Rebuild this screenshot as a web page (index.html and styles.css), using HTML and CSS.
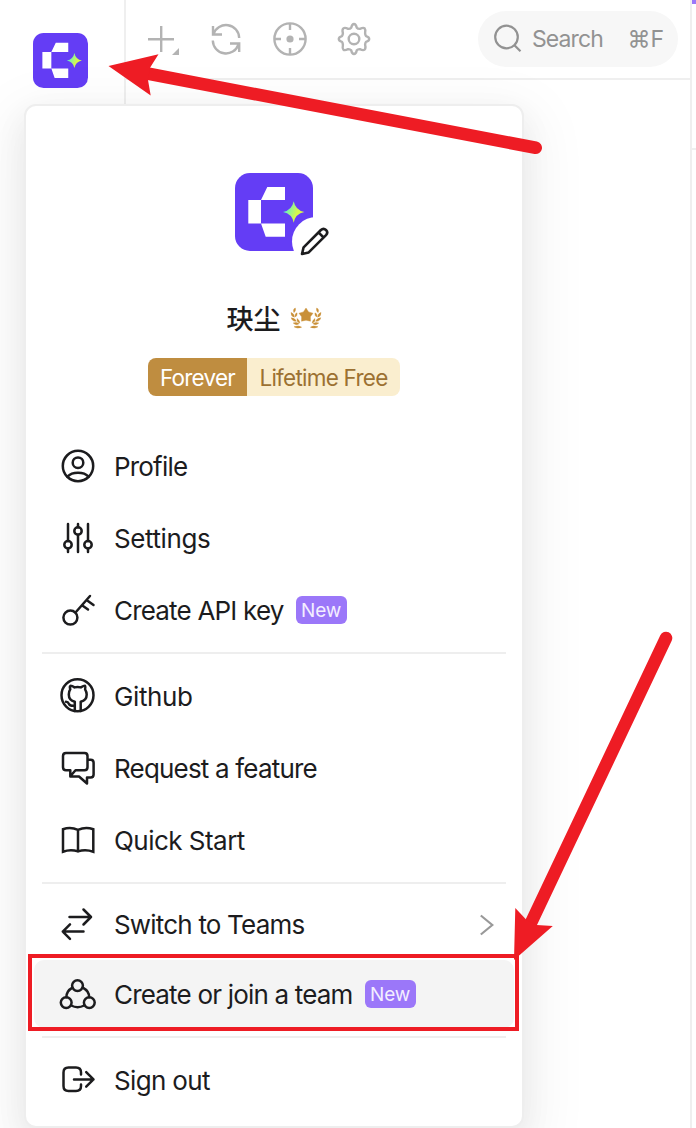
FILE: index.html
```html
<!DOCTYPE html>
<html lang="en">
<head>
<meta charset="utf-8">
<title>Account menu</title>
<link rel="stylesheet" href="styles.css">
</head>
<body>
<svg class="defs" width="0" height="0" aria-hidden="true">
  <defs>
    <linearGradient id="spark" x1="0" y1="0" x2="1" y2="0.4">
      <stop offset="0.2" stop-color="#62f0c8"/>
      <stop offset="0.75" stop-color="#d6f84c"/>
    </linearGradient>
    <symbol id="logo" viewBox="0 0 78 78">
      <rect width="78" height="78" rx="15" fill="#643df5"/>
      <path fill="#fff" d="M13.3 27H26V50.5H13.3zM32.3 14H50V27H26zM26 50.5H50V63.7H30.7z"/>
      <path fill="url(#spark)" d="M58.7 28.3Q60.4 37.3 69.4 39Q60.4 40.7 58.7 49.7Q57 40.7 48 39Q57 37.3 58.7 28.3z"/>
    </symbol>
  </defs>
</svg>
<div class="app">
  <aside class="sidebar"><svg class="logo-small"><use href="#logo"/></svg></aside>
  <main class="main">
    <header class="toolbar">
      <div class="tools">
        <svg class="tool" viewBox="0 0 40 40"><path d="M6 19.2H32M19.2 6V32"/><path class="solid" d="M37 28V35H30z"/></svg>
        <svg class="tool" viewBox="0 0 40 40"><path d="M7 6V14.5H16M7.5 14A13.2 13.2 0 0 1 33.2 18M33.2 32V23.5H24M6.8 20.5A13.2 13.2 0 0 0 32.5 24.5"/></svg>
        <svg class="tool" viewBox="0 0 40 40"><circle cx="20" cy="19" r="15.6"/><path d="M20 3.4V10M20 28V34.6M4.4 19H11M29 19H35.6"/><circle class="solid" cx="20" cy="19" r="3.6"/></svg>
        <svg class="tool" viewBox="0 0 40 40"><path stroke-linejoin="round" d="M17.2 7.8Q18 4 20 4T22.8 7.8Q23.8 9 25.9 8.9Q29.5 7.1 30.6 8.4T31.1 13.1Q31.2 15 32 16.1Q35.2 17 35.2 19T32 21.9Q31.2 23 31.1 24.9Q32.1 28.4 30.6 29.6T25.9 29.1Q23.8 29 22.8 30.2Q22 34 20 34T17.2 30.2Q16.2 29 14.1 29.1Q10.6 30.8 9.4 29.6T8.9 24.9Q8.8 23 8 21.9Q4.8 21 4.8 19T8 16.1Q8.8 15 8.9 13.1Q7.9 9.6 9.4 8.4T14.1 8.9Q16.2 9 17.2 7.8z"/><circle cx="20" cy="19" r="5.3"/></svg>
      </div>
      <div class="search">
        <svg class="search-icon" viewBox="0 0 30 30"><circle cx="13.5" cy="13" r="11.3"/><path d="M21.2 21L27.5 27.3"/></svg>
        <span class="search-label">Search</span><span class="shortcut">⌘F</span>
      </div>
    </header>
  </main>
  <aside class="rail"><div class="rail-accent"></div></aside>
</div>

<section class="menu">
  <div class="account">
    <div class="avatar">
      <svg class="logo-large"><use href="#logo"/></svg>
      <div class="edit"><svg viewBox="0 0 30 30"><path d="M2 28L3.6 21.3L20.9 4Q23.5 1.6 26 4T26 9.1L8.7 26.4zM18.5 6.4L23.6 11.5"/></svg></div>
    </div>
    <div class="name"><span>玦尘</span>
      <svg class="laurel" viewBox="0 0 32 22"><path d="M16 1L18.6 4.9L23 6.2L20.4 9.8L20.5 14.2L16 13.2L11.5 14.2L11.6 9.8L9 6.2L13.4 4.9z"/><g id="branch"><path d="M5.3 1Q2.5 2.2 4 5.6Q6.2 3.5 5.3 1zM1 5.4Q.8 9.6 4.4 10.2Q4.5 6.8 1 5.4zM7 5.8Q4.2 6.8 5.4 10Q7.6 8.6 7 5.8zM1.2 10.8Q2.3 14.8 6.4 14.2Q5 11.2 1.2 10.8zM3.2 16Q6 19 9 16.8Q6.6 14.6 3.2 16zM4 19.8Q8.8 18 11.6 20.2Q7.5 22.2 4 19.8zM7 11.5Q6.6 15.4 9.8 16.2Q10 13.4 7 11.5z"/></g><use href="#branch" transform="matrix(-1 0 0 1 32 0)"/></svg>
    </div>
    <div class="plan"><span class="plan-term">Forever</span><span class="plan-name">Lifetime Free</span></div>
  </div>
  <nav class="group">
    <a class="item"><svg class="icon" viewBox="0 0 40 40"><circle cx="20" cy="20" r="15.2"/><circle cx="20" cy="16.7" r="5.3"/><path d="M9.5 30.7Q13 26.8 20 26.8T30.5 30.7"/></svg><span class="snug">Profile</span></a>
    <a class="item"><svg class="icon" viewBox="0 0 40 40"><path d="M10 6V23M10 30.5V34M20 6V9.2M20 16.8V34M30 6V23M30 30.5V34"/><circle cx="10" cy="26.8" r="3.7"/><circle cx="20" cy="13" r="3.7"/><circle cx="30" cy="26.8" r="3.7"/></svg><span class="loose">Settings</span></a>
    <a class="item"><svg class="icon" viewBox="0 0 40 40"><circle cx="12.4" cy="27.6" r="7"/><path d="M17.5 22.5L32 6M28.5 10L35.5 15M24 15.2L30 19.5"/></svg><span class="snug">Create API key</span><b class="badge">New</b></a>
  </nav>
  <nav class="group">
    <a class="item"><svg class="icon" viewBox="0 0 40 40"><circle cx="19.5" cy="19.2" r="16"/><path d="M16.8 35V25.8C13 24.8 10.8 22.5 10.8 18.5C10.8 16.2 11.4 14.5 12.3 13.3C11.8 11.8 12 10 12.5 9.8Q14.2 9.8 16.5 11.4Q19.5 10.6 22.8 11.4Q25.5 9.8 27 9.8C27.6 11 27.6 12 27.1 13.3C28 14.8 28.7 16.3 28.7 18.5C28.7 22.5 26.5 24.8 22.7 25.8V35M8 25.8Q10 25.8 11 28T16.5 29.8"/></svg><span class="loose">Github</span></a>
    <a class="item"><svg class="icon" viewBox="0 0 40 40"><path d="M8 5H26.5Q29.5 5 29.5 8V19.3Q29.5 22.3 26.5 22.3H17.5L12.3 28.3V22.3H8Q5 22.3 5 19.3V8Q5 5 8 5zM29.5 11.8H32.6Q35.6 11.8 35.6 14.8V26.5Q35.6 29.5 32.6 29.5H29V35.5L21 28.5H12.3"/></svg><span class="snug">Request a feature</span></a>
    <a class="item"><svg class="icon" viewBox="0 0 40 40"><path stroke-linejoin="miter" d="M20 9.8Q12.5 6.5 5 9.2V31.7Q12.5 29 20 31.4Q27.5 29 35.3 31.7V9.2Q27.5 6.5 20 9.8V31.4"/></svg><span>Quick Start</span></a>
  </nav>
  <nav class="group tight">
    <a class="item"><svg class="icon" viewBox="0 0 40 40"><path d="M11.5 13H33M25.5 5.5L33 13L25.5 20.5M25.5 27.6H4.8M12 20.3L4.8 27.6L12 34.9"/></svg><span class="snug">Switch to Teams</span><svg class="chevron" viewBox="0 0 14 22"><path d="M.8 1.5L12.3 11L.8 20.5"/></svg></a>
    <a class="item active"><svg class="icon" viewBox="0 0 40 40"><circle cx="19.5" cy="11.6" r="5.4"/><circle cx="8.2" cy="28.6" r="5.4"/><circle cx="31.3" cy="28.6" r="5.4"/><path d="M14.4 13.7Q8.5 17 8.4 23.2M24.8 13.7Q31 17 31.2 23.2M13.2 31.5Q19.6 34.8 26.2 31.5"/></svg><span class="snug">Create or join a team</span><b class="badge">New</b></a>
  </nav>
  <nav class="group">
    <a class="item"><svg class="icon" viewBox="0 0 40 40"><path d="M23 14.5V12.5Q23 7.5 18 7.5H10.5Q5.5 7.5 5.5 12.5V26Q5.5 31 10.5 31H18Q23 31 23 26V24.6M16 19.4H35.4M28.2 12.2L35.5 19.4L28.2 26.6"/></svg><span class="out">Sign out</span></a>
  </nav>
</section>

<svg class="annotations" viewBox="0 0 696 1128">
  <rect x="30" y="956" width="487" height="73"/>
  <path class="shaft" d="M146 73.3L535.7 147.8M666 638L530 925"/>
  <path class="head" d="M108.5 66L158.5 54.3L150 67.7L148 80L150.7 95.5zM514 960L515.3 908L526.3 919.7L536.7 925L552.8 926z"/>
</svg>
</body>
</html>
```
FILE: styles.css
```css
* { box-sizing: border-box; }
body {
  margin: 0;
  width: 696px;
  height: 1128px;
  position: relative;
  overflow: hidden;
  background: #fff;
  color: #1c1c1e;
  font-family: Inter, "Noto Sans CJK SC", sans-serif;
}
svg { display: block; flex: none; }
.defs { position: absolute; }

.app { display: flex; height: 1128px; }
.sidebar { width: 126px; border-right: 2px solid #efefef; padding: 32.5px 0 0 32.5px; }
.logo-small { width: 55px; height: 55px; }
.main { flex: 1; }
.toolbar {
  height: 80px;
  border-bottom: 2px solid #efefef;
  display: flex;
  align-items: center;
  justify-content: space-between;
  padding: 0 12px 0 16px;
}
.tools { display: flex; gap: 24px; padding-top: 2px; }
.tool { width: 40px; height: 40px; fill: none; stroke: #b3b3b3; stroke-width: 2.4; }
.tool .solid { fill: #b3b3b3; stroke: none; }
.search {
  width: 200px;
  height: 56px;
  border-radius: 28px;
  background: #f7f7f7;
  display: flex;
  align-items: center;
  padding: 0 14px 0 15px;
  color: #929292;
  font-size: 23px;
}
.search-icon { width: 30px; height: 30px; fill: none; stroke: #929292; stroke-width: 2.2; }
.search-label { margin-left: 9px; letter-spacing: -0.9px; }
.shortcut { margin-left: auto; white-space: nowrap; }
.rail { position: relative; width: 6px; height: 150px; border-bottom: 2px solid #efefef; }
.rail::after { content: ""; position: absolute; left: 0; top: 0; width: 2px; height: 1128px; background: #efefef; }
.rail-accent { width: 4px; height: 4px; margin-left: 2px; background: #9b77f9; }

.menu {
  position: absolute;
  left: 24px;
  top: 104px;
  width: 500px;
  height: 1024px;
  border: 2px solid #eee;
  border-radius: 12px;
  background: #fff;
  background-clip: padding-box;
  box-shadow: 0 12px 32px rgba(0,0,0,.06), 0 18px 56px 16px rgba(0,0,0,.05);
  padding-top: 67px;
}
.account { display: flex; flex-direction: column; align-items: center; }
.avatar { position: relative; width: 78px; height: 78px; }
.logo-large { width: 78px; height: 78px; }
.edit {
  position: absolute;
  left: 57px;
  top: 43.5px;
  width: 49px;
  height: 49px;
  border-radius: 50%;
  background: #fff;
}
.edit svg { width: 30px; height: 30px; margin: 9px 0 0 8px; fill: none; stroke: #1c1c1e; stroke-width: 2.6; stroke-linejoin: round; }
.name {
  margin-top: 47px;
  height: 40px;
  display: flex;
  align-items: center;
  gap: 9px;
  font: 500 27px/40px "Noto Sans CJK SC", sans-serif;
}
.laurel { width: 32px; height: 22px; fill: #c99037; stroke: #c99037; stroke-width: .4; }
.plan {
  margin-top: 20px;
  height: 38px;
  width: 252px;
  display: flex;
  border-radius: 8px;
  overflow: hidden;
  font-size: 22.5px;
  line-height: 39px;
  text-align: center;
  white-space: nowrap;
  letter-spacing: -0.75px;
}
.plan-term { width: 99px; background: #bf8d40; color: #fff; }
.plan-name { flex: 1; background: #faeecf; color: #9c7132; }

.group { margin: 0 8px; display: flex; flex-direction: column; gap: 4px; }
.account + .group { margin-top: 36px; }
.group + .group { padding-top: 8px; margin: 8px 16px 0; border-top: 2px solid #eee; }
.group + .group .item { margin: 0 -8px; }
.group.tight { gap: 2px; }
.group + .group.tight { padding-top: 6px; }
.item {
  height: 68px;
  display: flex;
  align-items: center;
  padding: 0 20px 0 24px;
  border-radius: 10px;
  font-size: 26px;
  line-height: 36px;
  white-space: nowrap;
  letter-spacing: -0.53px;
}
.item span { margin-left: 16px; padding-top: 2px; }
.item .snug { letter-spacing: -0.81px; }
.item .loose { letter-spacing: -0.4px; }
.item .out { letter-spacing: -0.65px; }
.active { background: #f4f4f4; }
.icon { width: 40px; height: 40px; fill: none; stroke: #1c1c1e; stroke-width: 2.5; stroke-linejoin: round; stroke-linecap: round; }
.badge {
  margin-left: 12px;
  width: 51px;
  height: 28px;
  border-radius: 6px;
  background: #9b77f9;
  color: #f3eeff;
  font-weight: 400;
  font-size: 19px;
  line-height: 29px;
  text-align: center;
  letter-spacing: -0.2px;
}
.chevron { width: 14px; height: 22px; margin: 2px 0 0 auto; fill: none; stroke: #999; stroke-width: 2.2; }

.annotations { position: absolute; left: 0; top: 0; width: 696px; height: 1128px; fill: none; stroke: #ee1c24; }
.annotations rect { stroke-width: 4; }
.shaft { stroke-width: 12.6; stroke-linecap: round; }
.annotations .head { fill: #ee1c24; stroke: none; }
```
